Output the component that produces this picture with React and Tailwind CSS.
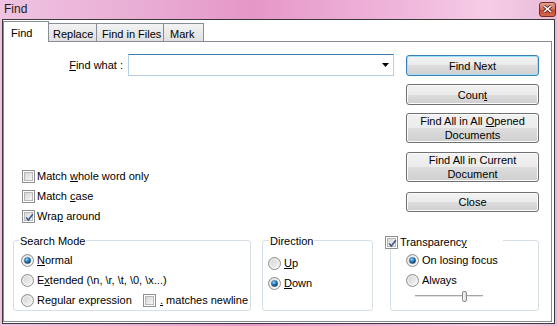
import React from "react";

const font = { fontFamily: '"Liberation Sans", Arial, sans-serif' };

const Radio = ({ checked }) => (
  <svg width="13" height="13" viewBox="0 0 13 13" className="shrink-0">
    <defs>
      <linearGradient id="radioFill" x1="0" y1="0" x2="1" y2="1">
        <stop offset="0" stopColor="#cfcfcf" />
        <stop offset="1" stopColor="#fafafa" />
      </linearGradient>
      <radialGradient id="radioDot" cx="0.4" cy="0.35" r="0.7">
        <stop offset="0" stopColor="#9fdcfb" />
        <stop offset="0.45" stopColor="#2a7bb8" />
        <stop offset="1" stopColor="#0b3558" />
      </radialGradient>
    </defs>
    <circle cx="6.5" cy="6.5" r="6" fill="url(#radioFill)" stroke="#8e8f8f" />
    <circle cx="6.5" cy="6.5" r="4.5" fill="none" stroke="#f4f4f4" strokeWidth="0.8" />
    {checked && <circle cx="6.5" cy="6.5" r="3.3" fill="url(#radioDot)" />}
  </svg>
);

const Check = ({ checked }) => (
  <div className="w-[13px] h-[13px] shrink-0 border border-[#8e8f8f] bg-white p-[1px]">
    <div className="relative w-full h-full border border-[#b8b8b8] bg-[linear-gradient(135deg,#d6d6d6,#f7f7f7)]">
      {checked && (
        <svg width="9" height="9" viewBox="0 0 9 9" className="absolute left-0 top-0">
          <path d="M1.2 4.4 L3.4 7 L7.8 1.2" fill="none" stroke="#3c5590" strokeWidth="1.6" />
        </svg>
      )}
    </div>
  </div>
);

const Btn = ({ children, h, def, mt }) => (
  <div
    className={`${h} ${mt} flex items-center justify-center text-center leading-[14px] text-[11px] text-black rounded-[3px] border bg-[linear-gradient(to_bottom,#f2f2f2_0%,#ebebeb_50%,#dddddd_50%,#cfcfcf_100%)] ${
      def
        ? "border-[#3c7fb1] shadow-[inset_0_0_0_1px_#9fe2fb]"
        : "border-[#707070] shadow-[inset_0_0_0_1px_#fbfbfb]"
    }`}
  >
    <div>{children}</div>
  </div>
);

const CheckRow = ({ checked, children }) => (
  <div className="flex items-center h-[20px]">
    <Check checked={checked} />
    <span className="ml-[2px]">{children}</span>
  </div>
);

const RadioRow = ({ checked, children }) => (
  <div className="flex items-center h-[20px]">
    <Radio checked={checked} />
    <span className="ml-[3px]">{children}</span>
  </div>
);

export default function App() {
  return (
    <div
      className="w-[557px] h-[326px] flex flex-col text-[11px] text-black overflow-hidden bg-[linear-gradient(to_right,#efc3e1_0%,#eab2d7_20%,#e597c8_45%,#efb6db_72%,#f5cde6_88%,#e8bad9_100%)]"
      style={font}
    >
      {/* title bar */}
      <div className="h-[19px] flex items-center pl-[4px] pr-[1px] pb-[2px]">
        <span className="text-[12px] text-[#1b1b1b]">Find</span>
        <div className="ml-auto mt-[1px] w-[17px] h-[15px] rounded-[3px] border border-[#7a2a1e] bg-[linear-gradient(to_bottom,#e3a08f_0%,#d26b55_50%,#c0432c_51%,#d36a4e_100%)] flex items-center justify-center">
          <svg width="9" height="8" viewBox="0 0 9 8">
            <path d="M1 1 L8 7 M8 1 L1 7" stroke="#5a1e14" strokeWidth="3" />
            <path d="M1 1 L8 7 M8 1 L1 7" stroke="#ffffff" strokeWidth="1.6" />
          </svg>
        </div>
      </div>

      {/* client */}
      <div className="mx-[2px] mb-[2px] flex-1 border border-[#3a3a3a] bg-white flex flex-col">
        {/* tabs */}
        <div className="h-[21px] flex items-end">
          <div className="relative z-10 -mb-[1px] w-[46px] h-[21px] border border-b-0 border-[#898c95] bg-white pl-[7px] pt-[3px]">
            Find
          </div>
          <div className="w-[48px] h-[18px] border border-l-0 border-b-0 border-[#898c95] bg-[linear-gradient(to_bottom,#f3f3f3,#e0e0e0)] pl-[4px] pt-[2px]">
            Replace
          </div>
          <div className="w-[67px] h-[18px] border border-l-0 border-b-0 border-[#898c95] bg-[linear-gradient(to_bottom,#f3f3f3,#e0e0e0)] pl-[5px] pt-[2px]">
            Find in Files
          </div>
          <div className="w-[40px] h-[18px] border border-l-0 border-b-0 border-[#898c95] bg-[linear-gradient(to_bottom,#f3f3f3,#e0e0e0)] pl-[6px] pt-[2px]">
            Mark
          </div>
        </div>

        {/* tab page */}
        <div className="mr-[2px] mb-[1px] flex-1 border border-[#898c95] bg-white flex flex-col">
          <div className="flex">
            <div className="flex-1 flex flex-col">
              <div className="mt-[12px] h-[22px] flex items-center">
                <div className="w-[121px] pr-[2px] text-right">
                  <u>F</u>ind what :
                </div>
                <div className="ml-[3px] w-[266px] h-[22px] border border-[#b5cfe7] border-t-[#3d7bad] bg-white flex items-center justify-end pr-[4px]">
                  <svg width="7" height="4" viewBox="0 0 7 4">
                    <path d="M0 0 H7 L3.5 4 Z" fill="#000" />
                  </svg>
                </div>
              </div>
              <div className="mt-[90px] pl-[18px] flex flex-col">
                <CheckRow>
                  Match <u>w</u>hole word only
                </CheckRow>
                <CheckRow>
                  Match <u>c</u>ase
                </CheckRow>
                <CheckRow checked>
                  Wra<u>p</u> around
                </CheckRow>
              </div>
            </div>

            <div className="w-[133px] mr-[12px] mt-[13px] flex flex-col">
              <Btn h="h-[21px]" def>
                Find Next
              </Btn>
              <Btn h="h-[21px]" mt="mt-[8px]">
                Coun<u>t</u>
              </Btn>
              <Btn h="h-[30px]" mt="mt-[8px]">
                Find All in All <u>O</u>pened
                <br />
                Documents
              </Btn>
              <Btn h="h-[30px]" mt="mt-[9px]">
                Find All in Current
                <br />
                Document
              </Btn>
              <Btn h="h-[20px]" mt="mt-[10px]">
                Close
              </Btn>
            </div>
          </div>

          {/* groups */}
          <div className="mt-[14px] flex">
            <div className="relative ml-[9px] w-[238px] h-[71px] rounded-[3px] border border-[#d5dfe5] pt-[9px] pl-[7px]">
              <div className="absolute left-[5px] -top-[6px] px-[1px] bg-white leading-[13px]">Search Mode</div>
              <RadioRow checked>
                <u>N</u>ormal
              </RadioRow>
              <RadioRow>
                E<u>x</u>tended (\n, \r, \t, \0, \x...)
              </RadioRow>
              <div className="flex items-center h-[20px]">
                <div className="w-[122px] flex items-center">
                  <Radio />
                  <span className="ml-[3px]">
                    Re<u>g</u>ular expression
                  </span>
                </div>
                <Check />
                <span className="ml-[4px]">
                  <u>.</u> matches newline
                </span>
              </div>
            </div>

            <div className="relative ml-[11px] w-[111px] h-[71px] rounded-[3px] border border-[#d5dfe5] pt-[12px] pl-[5px]">
              <div className="absolute left-[6px] -top-[6px] px-[1px] bg-white leading-[13px]">Direction</div>
              <RadioRow>
                <u>U</u>p
              </RadioRow>
              <RadioRow checked>
                <u>D</u>own
              </RadioRow>
            </div>

            <div className="relative ml-[17px] w-[149px] h-[71px] rounded-[3px] border border-[#d5dfe5] pt-[9px] pl-[15px]">
              <div className="absolute -left-[6px] -top-[5px] w-[118px] h-[13px] bg-white flex items-center">
                <Check checked />
                <span className="ml-[2px]">
                  Transparenc<u>y</u>
                </span>
              </div>
              <RadioRow checked>On losing focus</RadioRow>
              <RadioRow>Always</RadioRow>
              <div className="relative ml-[9px] w-[68px] h-[12px] flex items-center">
                <div className="w-full h-[3px] border-t border-[#a6a6a6] border-b border-b-white bg-[#e2e2e2]" />
                <div className="absolute left-[47px] top-[1px] w-[5px] h-[11px] rounded-[2px] border border-[#8a8a8a] bg-[linear-gradient(to_right,#f6f6f6,#dcdcdc)]" />
              </div>
            </div>
          </div>
        </div>
      </div>
    </div>
  );
}
